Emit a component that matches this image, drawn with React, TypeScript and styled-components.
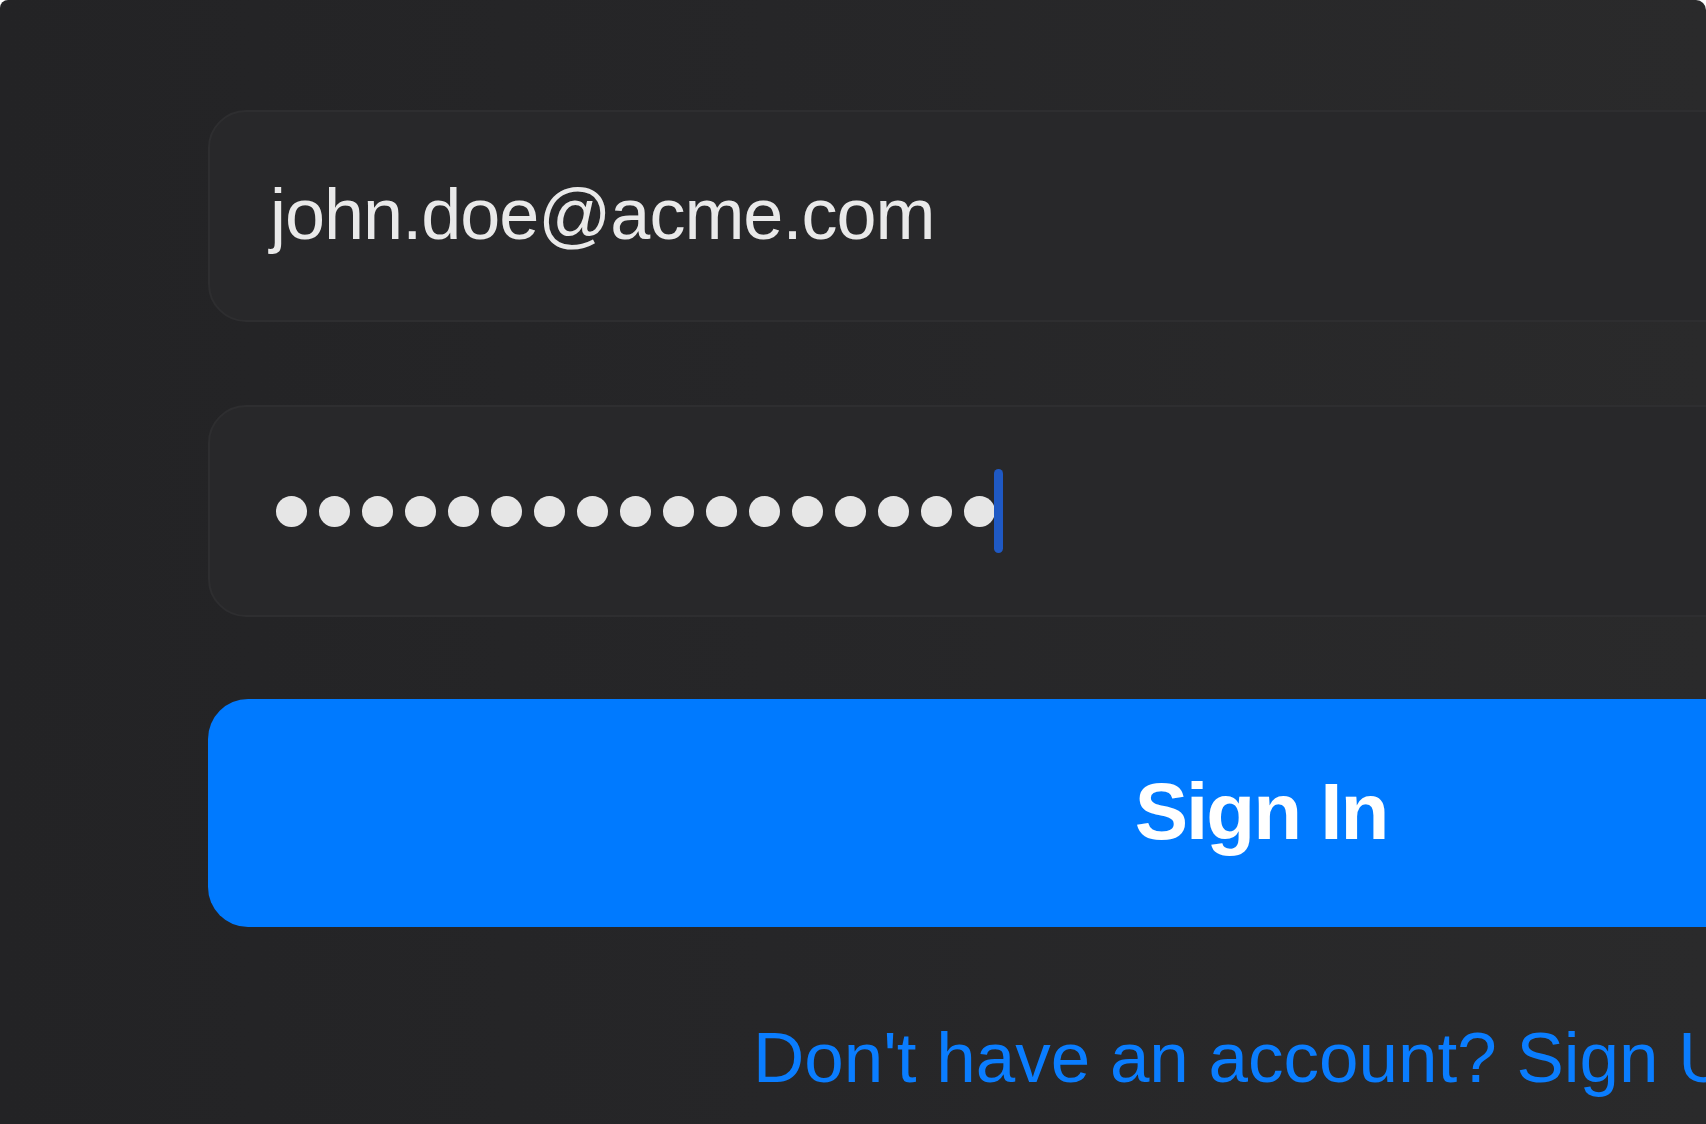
import styled, { createGlobalStyle } from "styled-components";

const GlobalStyle = createGlobalStyle`
  html, body {
    margin: 0;
    padding: 0;
    background: #ffffff;
    overflow: hidden;
  }
  * {
    box-sizing: border-box;
  }
`;

const Screen = styled.div`
  width: 1706px;
  height: 1124px;
  overflow: hidden;
  border-radius: 8px 10px 0 0;
  background: linear-gradient(90deg, #232325 0%, #262628 45%, #2a2a2b 100%);
  padding: 110px 0 0 208px;
  font-family: "Liberation Sans", Arial, Helvetica, sans-serif;
`;

const Form = styled.div`
  width: 2106px;
  display: flex;
  flex-direction: column;
`;

const Field = styled.div<{ $inset: number }>`
  height: 212px;
  border: 2px solid #2e2e30;
  border-radius: 38px;
  background: #28282a;
  display: flex;
  align-items: center;
  padding-left: ${(p) => p.$inset}px;
  & + & {
    margin-top: 83px;
  }
`;

const FieldText = styled.span`
  color: #e9e9e9;
  font-size: 72px;
  letter-spacing: -1px;
  line-height: 1;
  padding-bottom: 4px;
`;

const Dots = styled.div`
  display: flex;
  align-items: center;
  gap: 12px;
`;

const Dot = styled.span`
  width: 31px;
  height: 31px;
  border-radius: 50%;
  background: #e6e6e6;
`;

const Caret = styled.span`
  width: 9px;
  height: 84px;
  margin-left: -13px;
  border-radius: 5px;
  background: #1f59c4;
`;

const Button = styled.button`
  margin-top: 82px;
  height: 228px;
  border: none;
  border-radius: 40px;
  background: #007aff;
  color: #ffffff;
  font-family: inherit;
  font-size: 80px;
  font-weight: 700;
  letter-spacing: -2px;
  display: flex;
  align-items: center;
  justify-content: center;
  padding: 0 0 2px;
`;

const Footer = styled.div`
  margin-top: 95px;
  text-align: center;
  white-space: nowrap;
  color: #0a7dff;
  font-size: 71px;
  line-height: 1;
`;

const PASSWORD_LENGTH = 17;

export default function App() {
  return (
    <>
      <GlobalStyle />
      <Screen>
        <Form>
          <Field $inset={60}>
            <FieldText>john.doe@acme.com</FieldText>
          </Field>
          <Field $inset={66}>
            <Dots>
              {Array.from({ length: PASSWORD_LENGTH }, (_, i) => (
                <Dot key={i} />
              ))}
              <Caret />
            </Dots>
          </Field>
          <Button>Sign In</Button>
          <Footer>Don't have an account? Sign Up</Footer>
        </Form>
      </Screen>
    </>
  );
}
